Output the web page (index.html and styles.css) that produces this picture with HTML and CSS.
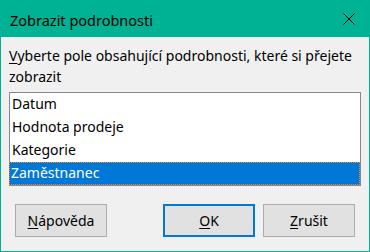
FILE: index.html
```html
<!DOCTYPE html>
<html lang="cs">
<head>
<meta charset="utf-8">
<title>Zobrazit podrobnosti</title>
<link rel="stylesheet" href="styles.css">
</head>
<body>
<div class="window">
  <div class="titlebar">
    <span class="title">Zobrazit podrobnosti</span>
    <span class="close"><svg width="12" height="12" viewBox="0 0 12 12"><path d="M0.5 0.5 L11.5 11.5 M11.5 0.5 L0.5 11.5" stroke="#000" stroke-width="1" fill="none"/></svg></span>
  </div>
  <div class="content">
    <div class="label"><u>V</u>yberte pole obsahující podrobnosti, které si přejete zobrazit</div>
    <div class="listbox">
      <div class="item">Datum</div>
      <div class="item">Hodnota prodeje</div>
      <div class="item">Kategorie</div>
      <div class="item selected">Zaměstnanec</div>
    </div>
    <div class="buttons">
      <button class="btn"><u>N</u>ápověda</button>
      <div class="right">
        <button class="btn default"><u>O</u>K</button>
        <button class="btn"><u>Z</u>rušit</button>
      </div>
    </div>
  </div>
</div>
</body>
</html>
```
FILE: styles.css
```css
html, body {
  margin: 0;
  padding: 0;
}
body {
  font-family: "Noto Sans", "Open Sans", sans-serif;
  font-size: 14px;
  color: #000;
  background: #f0f0f0;
}
.window {
  width: 370px;
  height: 252px;
  box-sizing: border-box;
  border: 1px solid #00b294;
  border-top: none;
  background: #f0f0f0;
  display: flex;
  flex-direction: column;
}
.titlebar {
  height: 37px;
  margin: 0 -1px;
  background: #00b294;
  display: flex;
  align-items: center;
  justify-content: space-between;
  padding: 0 15px 0 10px;
  box-sizing: border-box;
}
.title {
  font-size: 14.5px;
  line-height: 20px;
  padding-top: 3px;
}
.close {
  display: flex;
  width: 12px;
  height: 12px;
}
.content {
  padding: 8px 8px 0 8px;
  display: flex;
  flex-direction: column;
}
.label {
  line-height: 21px;
}
.label u {
  text-underline-offset: 2px;
}
.listbox {
  margin-top: 5px;
  height: 94px;
  box-sizing: border-box;
  border: 1px solid #828790;
  background: #fff;
}
.item {
  height: 23px;
  line-height: 22px;
  padding-left: 2px;
  box-sizing: border-box;
  white-space: nowrap;
}
.item.selected {
  background: #0078d7;
  color: #fff;
  border: 1px dotted #ff8728;
  padding-left: 1px;
  line-height: 20px;
  margin: 0 0 -1px -1px;
}
.buttons {
  margin-top: 18px;
  padding: 0 6px;
  display: flex;
  justify-content: space-between;
}
.right {
  display: flex;
  gap: 8px;
}
.btn {
  width: 92px;
  height: 33px;
  box-sizing: border-box;
  background: #e1e1e1;
  border: 1px solid #adadad;
  font-family: inherit;
  font-size: 14px;
  color: #000;
  padding: 0;
  margin: 0;
}
.btn u {
  text-underline-offset: 2px;
}
.btn.default {
  border: 2px solid #0078d7;
}
```
